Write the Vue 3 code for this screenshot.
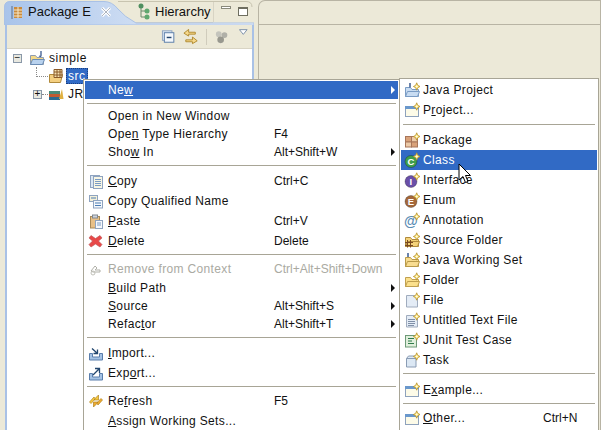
<script setup>
const star = '<path d="M12.700 .8l1 2.500 2.300 1.200-2.300 1.200-1 2.500-1-2.500-2.300-1.200 2.300-1.200z" fill="#ffe97a" stroke="#b8902c" stroke-width=".8"/><circle cx="12.700" cy="4.500" r="1.100" fill="#fffde0"/>'
const folder = (a, b) => `<path d="M1.500 5.500h5l1.500 2h6.500v7h-13z" fill="${a}" stroke="${b}"/><path d="M1.500 14.500l2-5h12l-2 5z" fill="${a}" stroke="${b}"/>`
const page = '<path d="M2.500 3.500h8l3 3v8.500h-11z" fill="#e4ecf6" stroke="#a0acbe"/>'
const win = '<rect x="1.500" y="4.500" width="13" height="10" fill="#fdfbe8" stroke="#8ea2bc"/><rect x="1" y="4" width="14" height="3" fill="#6a98cc"/>'
const lines = '<path d="M4 7.500h7M4 9.500h7M4 11.500h7M4 13.500h6" stroke="#8090a8"/>'
const circle = (c, t) => `<circle cx="7" cy="9.500" r="6" fill="${c}" stroke="#00000044"/><text x="7" y="13" text-anchor="middle" font-family="Liberation Sans" font-size="9.500" font-weight="700" fill="#fff">${t}</text>`
const grid = '<rect x="1.500" y="4.500" width="6" height="5.500" fill="#d9a27a" stroke="#a8765a"/><rect x="7.500" y="4.500" width="6" height="5.500" fill="#eccaa8" stroke="#a8765a"/><rect x="1.500" y="10" width="6" height="5" fill="#eccaa8" stroke="#a8765a"/><rect x="7.500" y="10" width="6" height="5" fill="#d9a27a" stroke="#a8765a"/>'
const tray = (arrow) => `<path d="M1.500 8.500v6.500h13v-6.500h-3v3.500h-7v-3.500z" fill="#a4c2e4" stroke="#5a7eac"/><path d="${arrow}" fill="none" stroke="#22466e" stroke-width="1.300"/>`

const icons = {
  javaProject: folder('#c8dcf2', '#7a9cc4') + '<path d="M6 1v4.500" stroke="#3a5a90" stroke-width="1.500"/>' + star,
  project: win + star,
  package: grid + star,
  classNew: circle('#3f9e4c', 'C') + star,
  interface: circle('#6a4fa8', 'I') + star,
  enum: circle('#a5683a', 'E') + star,
  annotation: '<text x="7" y="14" text-anchor="middle" font-family="Liberation Sans" font-size="14" font-weight="700" fill="#5a8cb4">@</text>' + star,
  sourceFolder: folder('#f4d27a', '#b08a3c') + '<path d="M1 10.500h8M1 13.500h8M3.500 8v7.500M6.500 8v7.500" stroke="#7a4a22"/>' + star,
  workingSet: '<path d="M4 1v5" stroke="#3a5a90" stroke-width="1.500"/>' + folder('#f8dc90', '#b99a4a') + star,
  folderNew: folder('#fbe08c', '#c0a050') + star,
  fileNew: page + star,
  textFile: page + lines + star,
  junit: '<rect x="1.500" y="3.500" width="11" height="11.500" fill="#e0efdc" stroke="#6e9a78"/><path d="M4 6.500h6M4 9h4M4 11.500h6" stroke="#2f7a4a" stroke-width="1.200"/>' + star,
  task: '<path d="M2.500 6.500h9.500v8.500h-9.500zM2.500 6.500l2-2.500h8l-.5 2.500" fill="#dce8f4" stroke="#8a9cb4"/>' + star,
  copy: '<rect x="2.500" y="2.500" width="9" height="12" fill="#dce8f4" stroke="#8fa4c0"/><rect x="5.500" y="3.500" width="9" height="12" fill="#f8f6e4" stroke="#8fa4c0"/><path d="M7 6.500h6M7 8.500h6M7 10.500h6M7 12.500h6" stroke="#7a9cc4"/>',
  copyQ: '<rect x="1.500" y="2.500" width="8" height="6" fill="#f4f0d8" stroke="#8fa4c0"/><rect x="5.500" y="7.500" width="9" height="7.500" fill="#f4f8fc" stroke="#8fa4c0"/><path d="M3 5h5M7 10h6M7 12.500h6" stroke="#4a7cb4"/>',
  paste: '<rect x="2.500" y="3.500" width="9" height="11.500" fill="#e8c088" stroke="#a88a5a"/><rect x="4.500" y="2" width="5" height="3" fill="#d0d4dc" stroke="#808890"/><rect x="7.500" y="7.500" width="7" height="8" fill="#f6f8fc" stroke="#8fa4c0"/><path d="M9 10h4M9 12h4" stroke="#7a9cc4"/>',
  del: '<path d="M3 2.500l4.500 3 4.500-3 2 2.500-3.500 3 3.500 3.500-2 2.500-4.500-3-4.500 3-2-2.500 3.500-3.500-3.500-3z" fill="#e84848" stroke="#b85050" stroke-width=".6"/>',
  remove: '<path d="M3 10l4-5 2 2-2 2h5v2H5z" fill="none" stroke="#b0b0a8"/><circle cx="5" cy="12" r="2" fill="none" stroke="#c0c0b8"/>',
  imp: tray('M4 3.500l5 4.500M9.500 4.500v4h-4'),
  exp: tray('M5 10l6-6M7 3.500h4.500v4.500'),
  refresh: '<path d="M1.500 9L6 4l1 1.500L10.500 2v5H6l1.200-1.200L4 9.500l-1 1z" fill="#f6c840" stroke="#b08420" stroke-width=".7"/><path d="M14.500 7L10 12l-1-1.500L5.500 14V9H10l-1.200 1.200L12 6.500l1-1z" fill="#eeaa30" stroke="#b08420" stroke-width=".7"/>'
}

const mainMenu = [
  { pre: 'Ne', key: 'w', post: '', active: true, arrow: true, size: 'short' },
  { sep: true, size: 'sepMid' },
  { pre: 'Open in New Window', size: 'short' },
  { pre: 'Ope', key: 'n', post: ' Type Hierarchy', hint: 'F4', size: 'short' },
  { pre: 'Sho', key: 'w', post: ' In', hint: 'Alt+Shift+W', arrow: true, size: 'short' },
  { sep: true, size: 'sepTall' },
  { icon: 'copy', pre: '', key: 'C', post: 'opy', hint: 'Ctrl+C' },
  { icon: 'copyQ', pre: 'Copy Qualified Name' },
  { icon: 'paste', pre: '', key: 'P', post: 'aste', hint: 'Ctrl+V' },
  { icon: 'del', pre: '', key: 'D', post: 'elete', hint: 'Delete' },
  { sep: true },
  { icon: 'remove', pre: 'Remove from Context', hint: 'Ctrl+Alt+Shift+Down', disabled: true },
  { pre: '', key: 'B', post: 'uild Path', arrow: true, size: 'short' },
  { pre: '', key: 'S', post: 'ource', hint: 'Alt+Shift+S', arrow: true, size: 'short' },
  { pre: 'Refac', key: 't', post: 'or', hint: 'Alt+Shift+T', arrow: true, size: 'short' },
  { sep: true, size: 'sepTall' },
  { icon: 'imp', pre: '', key: 'I', post: 'mport...' },
  { icon: 'exp', pre: 'Exp', key: 'o', post: 'rt...' },
  { sep: true },
  { icon: 'refresh', pre: 'Re', key: 'f', post: 'resh', hint: 'F5' },
  { pre: '', key: 'A', post: 'ssign Working Sets...' }
]

const subMenu = [
  { icon: 'javaProject', pre: 'Java Project' },
  { icon: 'project', pre: 'P', key: 'r', post: 'oject...' },
  { sep: true, size: 'sepTall' },
  { icon: 'package', pre: 'Package' },
  { icon: 'classNew', pre: 'Class', active: true },
  { icon: 'interface', pre: 'Interface' },
  { icon: 'enum', pre: 'Enum' },
  { icon: 'annotation', pre: 'Annotation' },
  { icon: 'sourceFolder', pre: 'Source Folder' },
  { icon: 'workingSet', pre: 'Java Working Set' },
  { icon: 'folderNew', pre: 'Folder' },
  { icon: 'fileNew', pre: 'File' },
  { icon: 'textFile', pre: 'Untitled Text File' },
  { icon: 'junit', pre: 'JUnit Test Case' },
  { icon: 'task', pre: 'Task' },
  { sep: true, size: 'sepLow' },
  { icon: 'project', pre: 'E', key: 'x', post: 'ample...' },
  { sep: true },
  { icon: 'project', pre: '', key: 'O', post: 'ther...', hint: 'Ctrl+N' }
]
</script>

<template>
  <div class="app">
    <section class="view">
      <div class="tabs">
        <svg class="tab-bg" width="254" height="25" viewBox="0 0 254 25">
          <defs>
            <linearGradient id="tabg" x1="0" x2="1" y1="0" y2="0">
              <stop offset="0" stop-color="#a9c4ea" />
              <stop offset="1" stop-color="#eef3fb" />
            </linearGradient>
          </defs>
          <path d="M118 1.500H246Q252 1.500 252 7" fill="none" stroke="#c8c4b0" />
          <path d="M213.500 2V22" fill="none" stroke="#d8d4c4" />
          <path d="M136 22.500H213" fill="none" stroke="#d8d4c4" />
          <path d="M4.500 25V7Q4.500 1.500 10 1.500H104Q112 1.500 118 9T136 23H254V25Z" fill="url(#tabg)" stroke="#a9c1e6" />
        </svg>
        <div class="tab active">
          <svg width="16" height="16" viewBox="0 0 16 16"><rect x="4" y="3" width="8" height="11" fill="#c98a3c" /><path d="M4 6h8M4 9h8M4 12h8M8 3v11" stroke="#f6e8c8" /><path d="M2 2v13" stroke="#5b6f8a" /></svg>
          <span>Package E</span>
          <svg class="close" width="10" height="10" viewBox="0 0 10 10"><path d="M1 1l8 8M9 1l-8 8" stroke="#fff" stroke-width="3" /><path d="M1 1l8 8M9 1l-8 8" stroke="#8a94a4" stroke-width=".7" /></svg>
        </div>
        <div class="tab">
          <svg width="14" height="18" viewBox="0 0 14 18"><path d="M4 3v11M4 8h6M4 14h6" stroke="#6a8a6a" /><circle cx="4" cy="3" r="2.500" fill="#4f8f5f" /><circle cx="10" cy="8" r="2.500" fill="#5fa86f" /><circle cx="10" cy="14" r="2.500" fill="#5fa86f" /></svg>
          <span>Hierarchy</span>
        </div>
        <div class="win-btns">
          <span class="min"></span>
          <span class="max"></span>
        </div>
      </div>
      <div class="panel">
        <div class="toolbar">
          <svg width="16" height="16" viewBox="0 0 16 16"><rect x="1.500" y="1.500" width="10" height="10" fill="#dce8f4" stroke="#8fa4c0" /><rect x="3.500" y="3.500" width="10" height="10" fill="#f4f8fc" stroke="#5a7ca8" /><path d="M6 8.500h5" stroke="#24466e" stroke-width="1.500" /></svg>
          <svg class="sync" width="18" height="18" viewBox="0 0 18 18"><path d="M7 1L2 5l5 3V6h7V4H7z" fill="#f6d88a" stroke="#b08a30" /><path d="M11 9l5 4-5 3v-2H4v-2h7z" fill="#f6d88a" stroke="#b08a30" /></svg>
          <i class="divider"></i>
          <svg class="gears" width="16" height="16" viewBox="0 0 16 16"><circle cx="5" cy="5" r="3" fill="#c4c4bc" /><circle cx="11" cy="6" r="3" fill="#b0b0a8" /><circle cx="7" cy="11" r="3.500" fill="#98988f" /></svg>
          <svg class="drop" width="10" height="7" viewBox="0 0 10 7"><path d="M.5 .5h8l-4 5z" fill="#fff" stroke="#7a8ea8" /></svg>
        </div>
        <div class="tree">
          <div class="row">
            <span class="toggle">−</span>
            <svg class="ticon" width="16" height="16" viewBox="0 0 16 16"><path d="M1.500 5.500h5l1.500 2h6.500v7h-13z" fill="#f4d988" stroke="#8f9cb0" /><path d="M1.500 14.500l2-5h12l-2 5z" fill="#b9d2ee" stroke="#6b8cb4" /><path d="M12 1v4.500Q12 7 10 6" fill="none" stroke="#3a5a90" stroke-width="1.300" /></svg>
            <span class="label">simple</span>
          </div>
          <div class="row child">
            <i class="stub"></i>
            <svg class="ticon" width="16" height="16" viewBox="0 0 16 16"><path d="M1.500 6.500h13l-2 8h-11z" fill="#f4cf80" stroke="#b08a3c" /><path d="M6 1.500h8v8h-8z" fill="#f4e0b0" stroke="#8a5a28" /><path d="M6 4h8M6 7h8M9 1.500v8M12 1.500v8" stroke="#8a5a28" /></svg>
            <span class="label selected">src</span>
          </div>
          <div class="row jre">
            <span class="toggle">+</span>
            <i class="stub short"></i>
            <svg class="ticon" width="16" height="16" viewBox="0 0 16 16"><rect x="1" y="5" width="11" height="3" fill="#4a8a78" /><rect x="1" y="8" width="11" height="3" fill="#c05a30" /><rect x="1" y="11" width="11" height="3" fill="#2c6a90" /><path d="M11 13l3-10 1.500 10z" fill="#e0b040" /></svg>
            <span class="label">JR</span>
          </div>
        </div>
      </div>
    </section>
    <section class="editor"></section>

    <ul class="menu main-menu">
      <template v-for="(item, i) in mainMenu" :key="i">
        <li v-if="item.sep" class="sep" :class="item.size"></li>
        <li v-else class="item" :class="[item.size, { active: item.active, disabled: item.disabled }]">
          <span class="icon"><svg v-if="item.icon" width="16" height="16" viewBox="0 0 16 16" v-html="icons[item.icon]"></svg></span>
          <span class="text">{{ item.pre }}<u v-if="item.key">{{ item.key }}</u>{{ item.post }}</span>
          <span class="hint">{{ item.hint }}</span>
          <span class="arrow" :class="{ on: item.arrow }"></span>
        </li>
      </template>
    </ul>

    <ul class="menu sub-menu">
      <template v-for="(item, i) in subMenu" :key="i">
        <li v-if="item.sep" class="sep" :class="item.size"></li>
        <li v-else class="item" :class="{ active: item.active }">
          <span class="icon"><svg width="16" height="16" viewBox="0 0 16 16" v-html="icons[item.icon]"></svg></span>
          <span class="text">{{ item.pre }}<u v-if="item.key">{{ item.key }}</u>{{ item.post }}</span>
          <span class="hint">{{ item.hint }}</span>
        </li>
      </template>
    </ul>

    <svg class="cursor" width="14" height="22" viewBox="0 0 14 22"><path d="M1 1v16l4-3.500 2.500 6 2.500-1-2.500-6h5z" fill="#fff" stroke="#000" /></svg>
  </div>
</template>

<style scoped>
.app {
  position: relative;
  display: flex;
  width: 601px;
  height: 430px;
  overflow: hidden;
  background: #ece9d8;
  font-family: "Liberation Sans", Arial, sans-serif;
  font-size: 12px;
  letter-spacing: 0.35px;
  color: #111;
}
.view {
  display: flex;
  flex-direction: column;
  width: 254px;
  flex: none;
}
.tabs {
  position: relative;
  display: flex;
  align-items: center;
  height: 23px;
  flex: none;
  font-size: 13px;
  letter-spacing: 0;
  white-space: nowrap;
}
.tab-bg {
  position: absolute;
  left: 0;
  top: 0;
}
.tab {
  position: relative;
  display: flex;
  align-items: center;
  gap: 4px;
}
.tab.active {
  width: 137px;
  padding-left: 10px;
  box-sizing: border-box;
  gap: 2px;
}
.close {
  margin-left: 8px;
}
.win-btns {
  display: flex;
  gap: 7px;
  align-items: center;
  position: absolute;
  left: 221px;
  top: 6px;
}
.min {
  width: 8px;
  height: 1px;
  border: 1px solid #8a8a7c;
  background: #fff;
  margin-bottom: 7px;
}
.max {
  width: 8px;
  height: 6px;
  border: 1px solid #6e6e60;
  border-top-width: 2px;
  background: #fff;
}
.panel {
  display: flex;
  flex-direction: column;
  flex: 1;
  margin-left: 5px;
  border-left: 2px solid #a9c1e6;
  border-right: 2px solid #a9c1e6;
  border-top: 2px solid #a9c1e6;
  background: #fff;
}
.toolbar {
  display: flex;
  align-items: center;
  height: 23px;
  padding: 0 4px 0 154px;
  background: #ece9d8;
  border-bottom: 1px solid #d8d4c4;
  flex: none;
}
.sync {
  margin-left: 6px;
}
.divider {
  width: 1px;
  height: 16px;
  background: #d0ccbc;
  margin: 0 7px;
}
.gears {
  margin-right: 9px;
}
.drop {
  margin-bottom: 8px;
}
.tree {
  flex: 1;
  background: #fff;
  letter-spacing: 0.55px;
}
.row {
  display: flex;
  align-items: center;
  height: 18px;
  padding-left: 6px;
}
.row.child {
  padding-left: 29px;
}
.row.jre {
  padding-left: 26px;
}
.toggle {
  display: flex;
  align-items: center;
  justify-content: center;
  width: 9px;
  height: 9px;
  box-sizing: border-box;
  margin-right: 7px;
  border: 1px solid #8a98a8;
  background: #e8e8e0;
  font-size: 10px;
  line-height: 1;
  letter-spacing: 0;
  flex: none;
}
.jre .toggle {
  margin-right: 0;
}
.ticon {
  flex: none;
  margin-right: 2px;
}
.stub {
  position: relative;
  display: block;
  width: 12px;
  border-top: 1px dotted #8a8a8a;
}
.stub::before {
  content: "";
  position: absolute;
  left: 0;
  bottom: 0;
  height: 10px;
  border-left: 1px dotted #8a8a8a;
}
.stub.short {
  width: 6px;
}
.stub.short::before {
  display: none;
}
.label {
  padding: 1px 2px;
}
.label.selected {
  background: #316ac5;
  color: #fff;
  outline: 1px dotted #1a3f80;
  outline-offset: -1px;
}
.editor {
  flex: 1;
  margin-left: 4px;
  border: 1px solid #b8b4a4;
  border-bottom: none;
  border-radius: 7px 0 0 0;
  background: linear-gradient(#ece9d8 23px, #b8b4a4 23px, #b8b4a4 24px, #ece9d8 24px);
}
.menu {
  position: absolute;
  margin: 0;
  padding: 1px;
  list-style: none;
  background: #fff;
  border: 1px solid #a8a596;
  box-sizing: border-box;
}
.main-menu {
  left: 83px;
  top: 79px;
  width: 317px;
  height: 360px;
}
.sub-menu {
  left: 399px;
  top: 78px;
  width: 200px;
  height: 360px;
}
.item {
  display: flex;
  align-items: center;
  height: 20px;
  padding-left: 3px;
  white-space: nowrap;
}
.item.short {
  height: 18px;
}
.item.active {
  background: #316ac5;
  color: #fff;
}
.item.disabled {
  color: #aaaaa2;
}
.icon {
  display: flex;
  width: 16px;
  height: 16px;
  margin-right: 4px;
  flex: none;
}
.sub-menu .icon {
  margin-right: 3px;
}
.text {
  width: 166px;
  flex: none;
}
.sub-menu .text {
  width: 120px;
}
.hint {
  flex: 1;
  letter-spacing: 0;
}
.arrow.on {
  margin-right: 3px;
  border-left: 4px solid currentColor;
  border-top: 4px solid transparent;
  border-bottom: 4px solid transparent;
}
.sep {
  height: 8px;
  margin: 0 2px;
  background: linear-gradient(#a8a596, #a8a596) 0 3px / 100% 1px no-repeat;
}
.sep.sepMid {
  background-position: 0 4px;
}
.sep.sepTall {
  height: 10px;
  background-position: 0 4px;
}
.sep.sepLow {
  height: 10px;
}
.cursor {
  position: absolute;
  left: 458px;
  top: 163px;
}
</style>
